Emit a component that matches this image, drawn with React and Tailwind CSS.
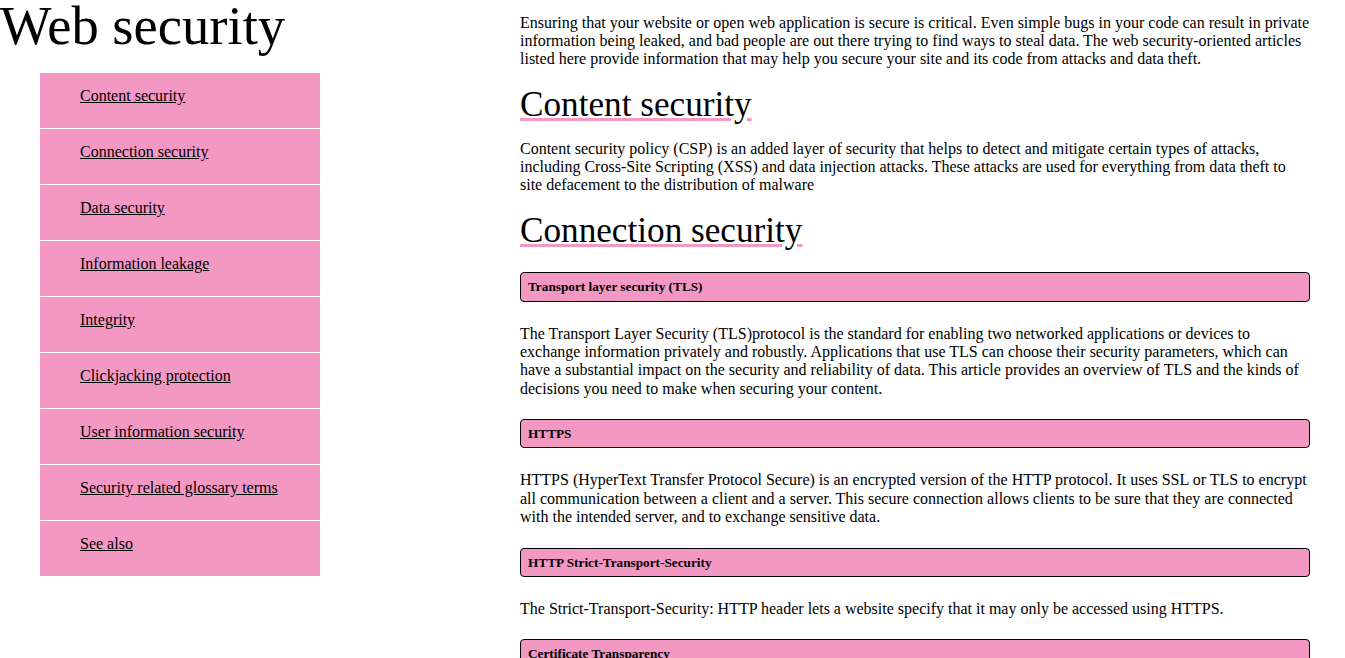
const navLinks = [
  "Content security",
  "Connection security",
  "Data security",
  "Information leakage",
  "Integrity",
  "Clickjacking protection",
  "User information security",
  "Security related glossary terms",
  "See also",
]

const connection = [
  {
    title: "Transport layer security (TLS)",
    text: "The Transport Layer Security (TLS)protocol is the standard for enabling two networked applications or devices to exchange information privately and robustly. Applications that use TLS can choose their security parameters, which can have a substantial impact on the security and reliability of data. This article provides an overview of TLS and the kinds of decisions you need to make when securing your content.",
  },
  {
    title: "HTTPS",
    text: "HTTPS (HyperText Transfer Protocol Secure) is an encrypted version of the HTTP protocol. It uses SSL or TLS to encrypt all communication between a client and a server. This secure connection allows clients to be sure that they are connected with the intended server, and to exchange sensitive data.",
  },
  {
    title: "HTTP Strict-Transport-Security",
    text: "The Strict-Transport-Security: HTTP header lets a website specify that it may only be accessed using HTTPS.",
  },
  {
    title: "Certificate Transparency",
    text: "Certificate Transparency is an open standard for monitoring and auditing certificates. It reduces the risk of wrong or malicious certificates being used by a site.",
  },
]

const SectionTitle = ({ children, className = "" }) => (
  <h2 className={`text-[35.2px] leading-[1.15] underline decoration-[#f398c2] ${className}`}>
    {children}
  </h2>
)

export default function App() {
  return (
    <div className="flex min-h-screen bg-white text-black font-['Liberation_Serif',serif] text-[16px] leading-[1.15]">
      {/* left column: title + pink nav */}
      <aside className="w-[520px] shrink-0">
        <h1 className="-mt-[1px] text-[54.6px] leading-none">Web security</h1>
        <ul className="mt-[19.4px] ml-10 w-[280px]">
          {navLinks.map((label) => (
            <li key={label} className="h-14 border-b border-white bg-[#f398c2] pl-10 pt-[14px]">
              <a href="#" className="underline">{label}</a>
            </li>
          ))}
        </ul>
      </aside>

      <main className="flex w-[790px] shrink-0 flex-col pb-10">
        <p className="mt-[13.5px]">
          Ensuring that your website or open web application is secure is critical. Even simple bugs in your code can result in private information being leaked, and bad people are out there trying to find ways to steal data. The web security-oriented articles listed here provide information that may help you secure your site and its code from attacks and data theft.
        </p>

        <SectionTitle className="mt-[16px]">Content security</SectionTitle>
        <p className="mt-[14.5px]">
          Content security policy (CSP) is an added layer of security that helps to detect and mitigate certain types of attacks, including Cross-Site Scripting (XSS) and data injection attacks. These attacks are used for everything from data theft to site defacement to the distribution of malware
        </p>

        <SectionTitle className="mt-[16px]">Connection security</SectionTitle>
        {connection.map((item, i) => (
          <div key={item.title} className="flex flex-col">
            <h5 className={`rounded border border-black bg-[#f398c2] px-[7px] py-[6px] text-[13.28px] font-bold leading-[1.15] ${i === 0 ? "mt-[21px]" : "mt-[21px]"}`}>
              {item.title}
            </h5>
            <p className="mt-[23px]">{item.text}</p>
          </div>
        ))}
      </main>
    </div>
  )
}
